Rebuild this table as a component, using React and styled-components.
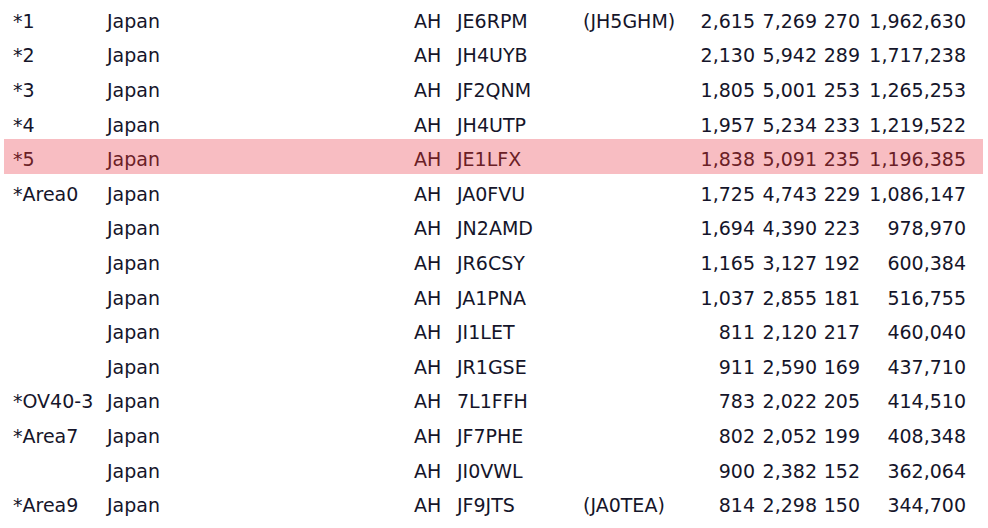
import React from "react";
import styled, { createGlobalStyle } from "styled-components";

const rows = [
  { rank: "*1", call: "JE6RPM", op: "(JH5GHM)", qso: "2,615", pts: "7,269", mult: "270", score: "1,962,630" },
  { rank: "*2", call: "JH4UYB", qso: "2,130", pts: "5,942", mult: "289", score: "1,717,238" },
  { rank: "*3", call: "JF2QNM", qso: "1,805", pts: "5,001", mult: "253", score: "1,265,253" },
  { rank: "*4", call: "JH4UTP", qso: "1,957", pts: "5,234", mult: "233", score: "1,219,522" },
  { rank: "*5", call: "JE1LFX", qso: "1,838", pts: "5,091", mult: "235", score: "1,196,385", mine: true },
  { rank: "*Area0", call: "JA0FVU", qso: "1,725", pts: "4,743", mult: "229", score: "1,086,147" },
  { rank: "", call: "JN2AMD", qso: "1,694", pts: "4,390", mult: "223", score: "978,970" },
  { rank: "", call: "JR6CSY", qso: "1,165", pts: "3,127", mult: "192", score: "600,384" },
  { rank: "", call: "JA1PNA", qso: "1,037", pts: "2,855", mult: "181", score: "516,755" },
  { rank: "", call: "JI1LET", qso: "811", pts: "2,120", mult: "217", score: "460,040" },
  { rank: "", call: "JR1GSE", qso: "911", pts: "2,590", mult: "169", score: "437,710" },
  { rank: "*OV40-3", call: "7L1FFH", qso: "783", pts: "2,022", mult: "205", score: "414,510" },
  { rank: "*Area7", call: "JF7PHE", qso: "802", pts: "2,052", mult: "199", score: "408,348" },
  { rank: "", call: "JI0VWL", qso: "900", pts: "2,382", mult: "152", score: "362,064" },
  { rank: "*Area9", call: "JF9JTS", op: "(JA0TEA)", qso: "814", pts: "2,298", mult: "150", score: "344,700" },
];

const GlobalStyle = createGlobalStyle`
  body {
    margin: 0;
    background: #ffffff;
    font-family: "DejaVu Sans", Verdana, sans-serif;
  }
`;

const Table = styled.div`
  width: 979px;
  padding: 1px 0 0 4px;
`;

const Row = styled.div`
  display: grid;
  grid-template-columns: 94px 307px 43px 126px 109px 63px 62px 43px 106px;
  align-items: center;
  height: 34.6px;
  padding: 5px 17px 0 9px;
  box-sizing: border-box;
  font-size: 19px;
  line-height: 22px;
  white-space: nowrap;
  color: ${(p) => (p.$mine ? "#6a2026" : "#15152a")};
  background: ${(p) => (p.$mine ? "#f8bdc2" : "transparent")};
`;

const Cell = styled.span`
  text-align: ${(p) => (p.$num ? "right" : "left")};
`;

export default function App() {
  return (
    <>
      <GlobalStyle />
      <Table>
        {rows.map((r, i) => (
          <Row key={i} $mine={r.mine}>
            <Cell>{r.rank}</Cell>
            <Cell>Japan</Cell>
            <Cell>AH</Cell>
            <Cell>{r.call}</Cell>
            <Cell>{r.op || ""}</Cell>
            <Cell $num>{r.qso}</Cell>
            <Cell $num>{r.pts}</Cell>
            <Cell $num>{r.mult}</Cell>
            <Cell $num>{r.score}</Cell>
          </Row>
        ))}
      </Table>
    </>
  );
}
